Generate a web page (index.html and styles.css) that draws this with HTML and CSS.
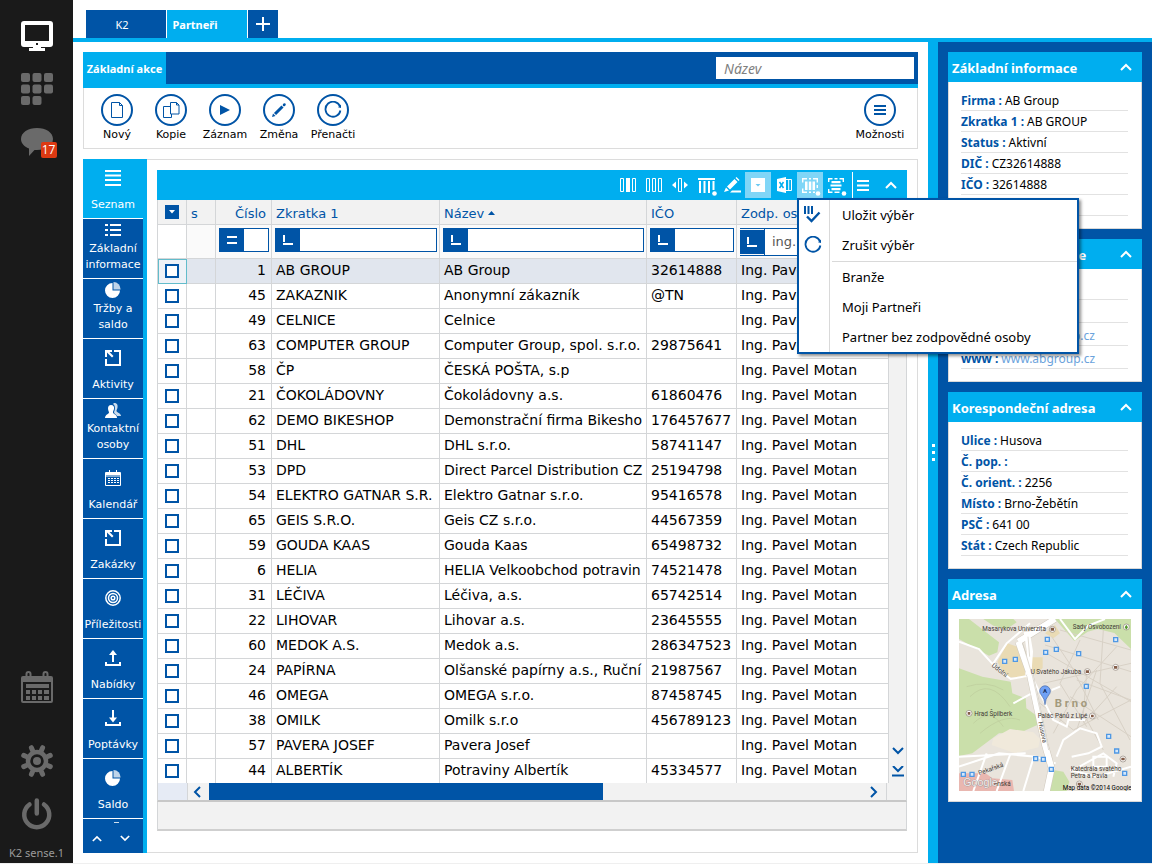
FILE: index.html
```html
<!DOCTYPE html>
<html lang="cs">
<head>
<meta charset="utf-8">
<title>K2 – Partneři</title>
<link rel="stylesheet" href="styles.css">
</head>
<body>
<svg class="defs" width="0" height="0" aria-hidden="true">
  <symbol id="up" viewBox="0 0 12 8"><path d="M1 7 6 2l5 5" fill="none" stroke="currentColor" stroke-width="2"/></symbol>
  <symbol id="down" viewBox="0 0 12 8"><path d="M1 1l5 5 5-5" fill="none" stroke="currentColor" stroke-width="2"/></symbol>
  <symbol id="reload" viewBox="0 0 18 18"><path d="M16 5.500A7.500 7.500 0 1 0 16.400 9.500" fill="none" stroke="currentColor" stroke-width="1.800"/><path d="M17 3.500v3.500l-3-.8z" fill="currentColor"/></symbol>
  <symbol id="leave" viewBox="0 0 16 16"><path d="M9 1h6v14H1V9" fill="none" stroke="currentColor" stroke-width="2"/><path d="M0 0h7v2H4.500l4 4L7 7.500l-5-5V7H0z" fill="currentColor"/></symbol>
  <symbol id="pie" viewBox="0 0 16 16"><path d="M7.500 1a7.500 7.500 0 1 0 7.500 7.500H7.500z" fill="currentColor"/><path d="M8.500 0a7 7 0 0 1 7 7.500h-7z" fill="currentColor" opacity=".75"/></symbol>
  <symbol id="starts" viewBox="0 0 10 10"><path d="M1 0v7" fill="none" stroke="currentColor" stroke-width="2"/><path d="M0 9h10" fill="none" stroke="currentColor" stroke-width="2"/></symbol>
</svg>
<div class="app">
  <aside class="rail">
    <div class="rail-group">
      <button class="rail-btn on" aria-label="Plocha"><svg width="32" height="32" viewBox="0 0 32 32"><path fill-rule="evenodd" fill="currentColor" d="M3 1h26a3 3 0 0 1 3 3v20a3 3 0 0 1-3 3H3a3 3 0 0 1-3-3V4a3 3 0 0 1 3-3zm1 4v16h24V5z"/><path fill="currentColor" d="M12 26h8v2h4v3H8v-3h4z"/><rect x="15" y="23" width="2" height="2" fill="#1a1a1a"/></svg></button>
      <button class="rail-btn" aria-label="Aplikace"><svg width="32" height="32" viewBox="0 0 32 32" fill="currentColor"><rect width="9" height="9" rx="2"/><rect x="11.500" width="9" height="9" rx="2"/><rect x="23" width="9" height="9" rx="2"/><rect y="11.500" width="9" height="9" rx="2"/><rect x="11.500" y="11.500" width="9" height="9" rx="2"/><rect x="23" y="11.500" width="9" height="9" rx="2"/><rect y="23" width="9" height="9" rx="2"/><rect x="11.500" y="23" width="9" height="9" rx="2"/></svg></button>
      <button class="rail-btn" aria-label="Zprávy"><svg width="32" height="30" viewBox="0 0 32 30" fill="currentColor"><path d="M16 2c9 0 16 4.500 16 11S25 24 16 24c-1 0-1.800 0-2.500-.1L8 30v-7.500C3 20.500 0 17 0 13 0 6.500 7 2 16 2z"/></svg><span class="badge">17</span></button>
    </div>
    <div class="rail-group">
      <button class="rail-btn cal" aria-label="Kalendář"><svg width="32" height="33" viewBox="0 0 32 33"><path fill-rule="evenodd" fill="currentColor" d="M2 5h28a2 2 0 0 1 2 2v23a2 2 0 0 1-2 2H2a2 2 0 0 1-2-2V7a2 2 0 0 1 2-2zm0 6v19h28V11z"/><path d="M5.500 8V3a2 2 0 0 1 4 0v5M22.500 8V3a2 2 0 0 1 4 0v5" fill="none" stroke="currentColor" stroke-width="2"/><path fill="currentColor" d="M5 13h23v4H5zM5 19h4v4H5zm6 0h4v4h-4zm6 0h4v4h-4zm6 0h5v4h-5zM5 25h4v4H5zm6 0h4v4h-4zm6 0h4v4h-4zm6 0h5v4h-5z"/></svg></button>
      <button class="rail-btn" aria-label="Nastavení"><svg width="32" height="32" viewBox="-16 -16 32 32"><circle r="9" fill="none" stroke="currentColor" stroke-width="4.500"/><circle r="4" fill="currentColor"/><g stroke="currentColor" stroke-width="5" stroke-linecap="round"><path d="M4.500-10.800 5.600-13.300M-4.500-10.800-5.600-13.300M4.500 10.800 5.600 13.300M-4.500 10.800-5.600 13.300M10.800-4.500 13.300-5.600M10.800 4.500 13.300 5.600M-10.800-4.500-13.300-5.600M-10.800 4.500-13.300 5.600"/></g></svg></button>
      <button class="rail-btn" aria-label="Vypnout"><svg width="32" height="32" viewBox="0 0 32 32" fill="none" stroke="currentColor" stroke-width="4.500" stroke-linecap="round"><path d="M8.500 6.500a12.500 12.500 0 1 0 14.500 0M15.800 2.500v13"/></svg></button>
      <span class="version">K2 sense.1</span>
    </div>
  </aside>

  <div class="desk">
    <nav class="tabs">
      <button class="tab">K2</button>
      <button class="tab active">Partneři</button>
      <button class="tab add" aria-label="Nová záložka"><svg width="14" height="14" viewBox="0 0 14 14"><path d="M7 0v14M0 7h14" stroke="#fff" stroke-width="2"/></svg></button>
    </nav>

    <div class="work">
      <main class="left">
        <section class="ribbon">
          <div class="ribbon-head">
            <button class="ribbon-tab">Základní akce</button>
            <input class="search" type="text" placeholder="Název" aria-label="Název">
          </div>
          <div class="actions">
            <button class="action"><span class="ring"><svg width="16" height="18" viewBox="0 0 16 18"><path d="M2.500 1.500h8l3 3v12h-11z M10.500 1.500v3h3" fill="none" stroke="currentColor"/></svg></span>Nový</button>
            <button class="action"><span class="ring"><svg width="18" height="18" viewBox="0 0 18 18" fill="none" stroke="currentColor"><path d="M8.500 1.500h6l2.500 2.500v9H8.500z M14.500 1.500V4H17M8.500 5.500h-7v11h8V13"/></svg></span>Kopie</button>
            <button class="action"><span class="ring"><svg width="12" height="12" viewBox="0 0 12 12"><path d="M1 1l10 5-10 5z" fill="currentColor"/></svg></span>Záznam</button>
            <button class="action"><span class="ring"><svg width="16" height="16" viewBox="0 0 16 16"><path d="M4 12l7.500-7.500" stroke="currentColor" stroke-width="3"/><path d="M13 3l.5-.5" stroke="currentColor" stroke-width="2.500" stroke-linecap="round"/><path d="M1 15l1-3.500L4.500 14z" fill="currentColor"/></svg></span>Změna</button>
            <button class="action"><span class="ring"><svg width="18" height="18"><use href="#reload"/></svg></span>Přenačti</button>
            <button class="action last"><span class="ring"><svg width="12" height="12" viewBox="0 0 12 12"><path d="M0 2h12M0 6h12M0 10h12" stroke="currentColor" stroke-width="2"/></svg></span>Možnosti</button>
          </div>
        </section>

        <section class="module">
          <nav class="views">
            <button class="view active"><span class="vi"><svg width="16" height="16" viewBox="0 0 16 16"><path d="M0 1h16M0 5.500h16M0 10h16M0 15h16" stroke="currentColor" stroke-width="2"/></svg></span><span class="vl">Seznam</span></button>
            <button class="view two"><span class="vi"><svg width="16" height="12" viewBox="0 0 16 12"><path d="M0 1h3M5 1h11M0 6h3M5 6h11M0 11h3M5 11h11" stroke="currentColor" stroke-width="2"/></svg></span><span class="vl">Základní informace</span></button>
            <button class="view two"><span class="vi"><svg width="16" height="16"><use href="#pie"/></svg></span><span class="vl">Tržby a saldo</span></button>
            <button class="view"><span class="vi"><svg width="16" height="16"><use href="#leave"/></svg></span><span class="vl">Aktivity</span></button>
            <button class="view two"><span class="vi"><svg width="16" height="15" viewBox="0 0 16 15" fill="currentColor"><path d="M9 0c3 0 4 2 3.500 4.500-.3 1.800-1 2.500-1 3.500 0 1.500 4.500 2 4.500 5h-4c-1-2-3-2-3-4 1-2 2-6-1-8z" opacity=".8"/><path d="M6 2c2.500 0 3.500 2 3 4-.3 1.800-1 2-1 3.500C8 11 12 11.500 12 15H0c0-3.500 4-4 4-5.500C4 8.500 3 7.500 3 5.500 3 3.500 4 2 6 2z"/></svg></span><span class="vl">Kontaktní osoby</span></button>
            <button class="view"><span class="vi"><svg width="16" height="16" viewBox="0 0 16 16"><path d="M.5 2.500h15v13H.5z M0 6h16M4.500 0v4M11.500 0v4" fill="none" stroke="currentColor"/><path d="M1 3h14v2H1z M3 8h2v1H3zm3 0h2v1H6zm3 0h2v1H9zm3 0h2v1h-2zM3 10h2v1H3zm3 0h2v1H6zm3 0h2v1H9zm3 0h2v1h-2zM3 12h2v1H3zm3 0h2v1H6zm3 0h2v1H9zm3 0h2v1h-2z" fill="currentColor"/></svg></span><span class="vl">Kalendář</span></button>
            <button class="view"><span class="vi"><svg width="16" height="16"><use href="#leave"/></svg></span><span class="vl">Zakázky</span></button>
            <button class="view"><span class="vi"><svg width="16" height="16" viewBox="0 0 16 16" fill="none" stroke="currentColor" stroke-width="1.500"><circle cx="8" cy="8" r="7.200"/><circle cx="8" cy="8" r="4.500"/><circle cx="8" cy="8" r="1.800"/></svg></span><span class="vl">Příležitosti</span></button>
            <button class="view"><span class="vi"><svg width="16" height="16" viewBox="0 0 16 16"><path d="M1 12v3h14v-3M8 12V3" fill="none" stroke="currentColor" stroke-width="2"/><path d="M4 5l4-5 4 5z" fill="currentColor"/></svg></span><span class="vl">Nabídky</span></button>
            <button class="view"><span class="vi"><svg width="16" height="16" viewBox="0 0 16 16"><path d="M1 12v3h14v-3M8 0v8" fill="none" stroke="currentColor" stroke-width="2"/><path d="M4 7.500l4 5 4-5z" fill="currentColor"/></svg></span><span class="vl">Poptávky</span></button>
            <button class="view"><span class="vi"><svg width="16" height="16"><use href="#pie"/></svg></span><span class="vl">Saldo</span></button>
            <div class="view-scroll">
              <button aria-label="Nahoru"><svg width="10" height="7"><use href="#up"/></svg></button>
              <button aria-label="Dolů"><svg width="10" height="7"><use href="#down"/></svg></button>
            </div>
          </nav>

          <div class="grid-box">
            <div class="grid-tools">
              <button class="tool" aria-label="Pevné sloupce"><svg width="16" height="14" viewBox="0 0 16 14"><path d="M.5.5h3v13h-3zM12.500.5h3v13h-3z" fill="none" stroke="#fff"/><path d="M6 0h4v14H6z" fill="#fff"/></svg></button>
              <button class="tool" aria-label="Sloupce"><svg width="16" height="14" viewBox="0 0 16 14"><path d="M.5.5h3v13h-3zM6.500.5h3v13h-3zM12.500.5h3v13h-3z" fill="none" stroke="#fff"/></svg></button>
              <button class="tool" aria-label="Šířka sloupců"><svg width="16" height="14" viewBox="0 0 16 14"><path d="M6.500.5h3v13h-3z" fill="none" stroke="#fff"/><path d="M4 3.500v7L0 7zM12 3.500v7L16 7z" fill="#fff"/></svg></button>
              <button class="tool low" aria-label="Výběr sloupců"><svg width="20" height="20" viewBox="0 0 20 20" fill="#fff"><path d="M1 1h17v2H1zM2 4h2v12H2zm4.500 0h2v12h-2zM11 4h2v12h-2zM15.500 4h2v9h-2z"/><circle cx="17.500" cy="16.500" r="2.300"/></svg></button>
              <button class="tool" aria-label="Upravit"><svg width="17" height="16" viewBox="0 0 17 16" fill="#fff"><path d="M3 9.500l7.500-7.500 3 3L6 12.500zM11.500 1l1-1 3 3-1 1zM0 15l2-4.500L5 13.500zM8 13.500h9v2H6z"/></svg></button>
              <button class="tool lit" aria-label="Filtr"><svg width="14" height="14" viewBox="0 0 14 14"><path d="M0 0h14v14H0z" fill="#fff"/><path d="M4.500 6h5L7 8.500z" fill="#6cc9f2"/></svg></button>
              <button class="tool" aria-label="Export do Excelu"><svg width="15" height="16" viewBox="0 0 15 16"><path d="M0 2l9-2v16l-9-2z" fill="#fff"/><path d="M9 2.500h5.500v11H9M11.700 3v10" fill="none" stroke="#fff"/><path d="M2.500 5l4 6M6.500 5l-4 6" stroke="#00aeef" stroke-width="1.500"/></svg></button>
              <div class="pop-anchor">
                <button class="tool lit low" aria-label="Výběr záznamů" aria-expanded="true"><svg width="20" height="20" viewBox="0 0 20 20"><path d="M1.700 5.500V1.700H6M8 1.700h2M12 1.700h4.300v3.800M1.700 11.500v3.800H6M8 15.300h2M12 15.300h2M16.300 8v3" fill="none" stroke="#fff" stroke-width="1.400"/><path d="M4 4.500h2.500v8.500H4zm3.800 0h2.500v8.500H7.800zm3.700 0H14v8.500h-2.500z" fill="#fff"/><circle cx="17" cy="16.500" r="2.300" fill="#fff"/></svg></button>
                <div class="popup" role="menu">
                  <button role="menuitem"><span class="mi"><svg width="17" height="18" viewBox="0 0 17 18"><path d="M1 0v8M4.500 0v8M8 0v8" stroke="currentColor" stroke-width="2"/><path d="M3 10.500l4.500 4.500 8-8.500" fill="none" stroke="currentColor" stroke-width="2.400"/></svg></span>Uložit výběr</button>
                  <button role="menuitem"><span class="mi"><svg width="18" height="18"><use href="#reload"/></svg></span>Zrušit výběr</button>
                  <hr>
                  <button role="menuitem"><span class="mi"></span>Branže</button>
                  <button role="menuitem"><span class="mi"></span>Moji Partneři</button>
                  <button role="menuitem"><span class="mi"></span>Partner bez zodpovědné osoby</button>
                </div>
              </div>
              <button class="tool low" aria-label="Seskupení"><svg width="20" height="20" viewBox="0 0 20 20"><path d="M1.700 5V1.700h3.800M7.500 1.700h3M12.500 1.700h3.800V5M1.700 12v3.300h3.800M7.500 15.300h5" fill="none" stroke="#fff" stroke-width="1.400"/><path d="M4.500 4h9v2.200h-9zM3.500 7.500h11v2h-11zM4.500 11h9v2.200h-9z" fill="#fff"/><circle cx="17" cy="16.500" r="2.300" fill="#fff"/></svg></button>
              <button class="tool menu" aria-label="Nabídka"><svg width="12" height="11" viewBox="0 0 12 11"><path d="M0 1h12M0 5.500h12M0 10h12" stroke="#fff" stroke-width="2"/></svg></button>
              <button class="tool" aria-label="Sbalit"><svg width="12" height="8"><use href="#up"/></svg></button>
            </div>

            <div class="grid-main">
              <table class="grid">
                <colgroup><col class="c-check"><col class="c-s"><col class="c-num"><col class="c-abbr"><col class="c-name"><col class="c-ico"><col></colgroup>
                <thead>
                  <tr class="heads">
                    <th class="ck"><button class="pick" aria-label="Označit"><svg width="6" height="4" viewBox="0 0 6 4"><path d="M0 0h6L3 3.500z" fill="#fff"/></svg></button></th>
                    <th>s</th><th class="n">Číslo</th><th>Zkratka 1</th><th>Název <svg width="7" height="4" viewBox="0 0 7 4" class="sort"><path d="M0 4h7L3.500 0z" fill="currentColor"/></svg></th><th>IČO</th><th>Zodp. osoba</th>
                  </tr>
                  <tr class="filters">
                    <td></td><td></td>
                    <td><div class="flt"><button aria-label="Rovná se"><svg width="10" height="8" viewBox="0 0 10 8"><path d="M0 1h10M0 7h10" stroke="#fff" stroke-width="2"/></svg></button><input type="text" aria-label="Filtr Číslo"></div></td>
                    <td><div class="flt"><button aria-label="Začíná na"><svg width="10" height="10"><use href="#starts"/></svg></button><input type="text" aria-label="Filtr Zkratka 1"></div></td>
                    <td><div class="flt"><button aria-label="Začíná na"><svg width="10" height="10"><use href="#starts"/></svg></button><input type="text" aria-label="Filtr Název"></div></td>
                    <td><div class="flt"><button aria-label="Začíná na"><svg width="10" height="10"><use href="#starts"/></svg></button><input type="text" aria-label="Filtr IČO"></div></td>
                    <td><div class="flt tall"><button aria-label="Začíná na"><svg width="10" height="10"><use href="#starts"/></svg></button><input type="text" value="ing." aria-label="Filtr Zodpovědná osoba"></div></td>
                  </tr>
                </thead>
                <tbody>
                  <tr class="sel"><td class="ck"><input type="checkbox" aria-label="AB GROUP"></td><td></td><td class="n">1</td><td>AB GROUP</td><td>AB Group</td><td>32614888</td><td>Ing. Pavel Motan</td></tr>
                  <tr><td class="ck"><input type="checkbox" aria-label="ZAKAZNIK"></td><td></td><td class="n">45</td><td>ZAKAZNIK</td><td>Anonymní zákazník</td><td>@TN</td><td>Ing. Pavel Motan</td></tr>
                  <tr><td class="ck"><input type="checkbox" aria-label="CELNICE"></td><td></td><td class="n">49</td><td>CELNICE</td><td>Celnice</td><td></td><td>Ing. Pavel Motan</td></tr>
                  <tr><td class="ck"><input type="checkbox" aria-label="COMPUTER GROUP"></td><td></td><td class="n">63</td><td>COMPUTER GROUP</td><td>Computer Group, spol. s.r.o.</td><td>29875641</td><td>Ing. Pavel Motan</td></tr>
                  <tr><td class="ck"><input type="checkbox" aria-label="ČP"></td><td></td><td class="n">58</td><td>ČP</td><td>ČESKÁ POŠTA, s.p</td><td></td><td>Ing. Pavel Motan</td></tr>
                  <tr><td class="ck"><input type="checkbox" aria-label="ČOKOLÁDOVNY"></td><td></td><td class="n">21</td><td>ČOKOLÁDOVNY</td><td>Čokoládovny a.s.</td><td>61860476</td><td>Ing. Pavel Motan</td></tr>
                  <tr><td class="ck"><input type="checkbox" aria-label="DEMO BIKESHOP"></td><td></td><td class="n">62</td><td>DEMO BIKESHOP</td><td>Demonstrační firma Bikesho</td><td>176457677</td><td>Ing. Pavel Motan</td></tr>
                  <tr><td class="ck"><input type="checkbox" aria-label="DHL"></td><td></td><td class="n">51</td><td>DHL</td><td>DHL s.r.o.</td><td>58741147</td><td>Ing. Pavel Motan</td></tr>
                  <tr><td class="ck"><input type="checkbox" aria-label="DPD"></td><td></td><td class="n">53</td><td>DPD</td><td>Direct Parcel Distribution CZ</td><td>25194798</td><td>Ing. Pavel Motan</td></tr>
                  <tr><td class="ck"><input type="checkbox" aria-label="ELEKTRO GATNAR"></td><td></td><td class="n">54</td><td>ELEKTRO GATNAR S.R.</td><td>Elektro Gatnar s.r.o.</td><td>95416578</td><td>Ing. Pavel Motan</td></tr>
                  <tr><td class="ck"><input type="checkbox" aria-label="GEIS S.R.O."></td><td></td><td class="n">65</td><td>GEIS S.R.O.</td><td>Geis CZ s.r.o.</td><td>44567359</td><td>Ing. Pavel Motan</td></tr>
                  <tr><td class="ck"><input type="checkbox" aria-label="GOUDA KAAS"></td><td></td><td class="n">59</td><td>GOUDA KAAS</td><td>Gouda Kaas</td><td>65498732</td><td>Ing. Pavel Motan</td></tr>
                  <tr><td class="ck"><input type="checkbox" aria-label="HELIA"></td><td></td><td class="n">6</td><td>HELIA</td><td>HELIA Velkoobchod potravin</td><td>74521478</td><td>Ing. Pavel Motan</td></tr>
                  <tr><td class="ck"><input type="checkbox" aria-label="LÉČIVA"></td><td></td><td class="n">31</td><td>LÉČIVA</td><td>Léčiva, a.s.</td><td>65742514</td><td>Ing. Pavel Motan</td></tr>
                  <tr><td class="ck"><input type="checkbox" aria-label="LIHOVAR"></td><td></td><td class="n">22</td><td>LIHOVAR</td><td>Lihovar a.s.</td><td>23645555</td><td>Ing. Pavel Motan</td></tr>
                  <tr><td class="ck"><input type="checkbox" aria-label="MEDOK A.S."></td><td></td><td class="n">60</td><td>MEDOK A.S.</td><td>Medok a.s.</td><td>286347523</td><td>Ing. Pavel Motan</td></tr>
                  <tr><td class="ck"><input type="checkbox" aria-label="PAPÍRNA"></td><td></td><td class="n">24</td><td>PAPÍRNA</td><td>Olšanské papírny a.s., Ruční</td><td>21987567</td><td>Ing. Pavel Motan</td></tr>
                  <tr><td class="ck"><input type="checkbox" aria-label="OMEGA"></td><td></td><td class="n">46</td><td>OMEGA</td><td>OMEGA s.r.o.</td><td>87458745</td><td>Ing. Pavel Motan</td></tr>
                  <tr><td class="ck"><input type="checkbox" aria-label="OMILK"></td><td></td><td class="n">38</td><td>OMILK</td><td>Omilk s.r.o</td><td>456789123</td><td>Ing. Pavel Motan</td></tr>
                  <tr><td class="ck"><input type="checkbox" aria-label="PAVERA JOSEF"></td><td></td><td class="n">57</td><td>PAVERA JOSEF</td><td>Pavera Josef</td><td></td><td>Ing. Pavel Motan</td></tr>
                  <tr><td class="ck"><input type="checkbox" aria-label="ALBERTÍK"></td><td></td><td class="n">44</td><td>ALBERTÍK</td><td>Potraviny Albertík</td><td>45334577</td><td>Ing. Pavel Motan</td></tr>
                </tbody>
              </table>
              <div class="vbar">
                <button aria-label="Další"><svg width="12" height="8"><use href="#down"/></svg></button>
                <button aria-label="Poslední"><svg width="12" height="11" viewBox="0 0 12 11"><path d="M1 0l5 5 5-5M0 9.500h12" fill="none" stroke="currentColor" stroke-width="2"/></svg></button>
              </div>
            </div>
            <div class="hbar">
              <span class="corner"></span>
              <button aria-label="Vlevo"><svg width="8" height="12" viewBox="0 0 8 12"><path d="M7 1 2 6l5 5" fill="none" stroke="currentColor" stroke-width="2"/></svg></button>
              <div class="track"><div class="thumb"></div></div>
              <button aria-label="Vpravo"><svg width="8" height="12" viewBox="0 0 8 12"><path d="M1 1l5 5-5 5" fill="none" stroke="currentColor" stroke-width="2"/></svg></button>
              <span class="end"></span>
            </div>
            <div class="grid-foot"></div>
          </div>
        </section>
      </main>

      <div class="splitter"><i></i><i></i><i></i></div>

      <aside class="right">
        <section class="card">
          <header><h2>Základní informace</h2><button aria-label="Sbalit"><svg width="12" height="8"><use href="#up"/></svg></button></header>
          <dl>
            <div><dt>Firma :</dt><dd>AB Group</dd></div>
            <div><dt>Zkratka 1 :</dt><dd>AB GROUP</dd></div>
            <div><dt>Status :</dt><dd>Aktivní</dd></div>
            <div><dt>DIČ :</dt><dd>CZ32614888</dd></div>
            <div><dt>IČO :</dt><dd>32614888</dd></div>
            <div></div>
          </dl>
        </section>
        <section class="card roomy">
          <header><h2>Kontaktní informace</h2><button aria-label="Sbalit"><svg width="12" height="8"><use href="#up"/></svg></button></header>
          <dl>
            <div></div>
            <div></div>
            <div><dt>E-mail :</dt><dd><a href="#mail">ab@abgroup.cz</a></dd></div>
            <div><dt>www :</dt><dd><a href="#www">www.abgroup.cz</a></dd></div>
          </dl>
        </section>
        <section class="card">
          <header><h2>Korespondeční adresa</h2><button aria-label="Sbalit"><svg width="12" height="8"><use href="#up"/></svg></button></header>
          <dl>
            <div><dt>Ulice :</dt><dd>Husova</dd></div>
            <div><dt>Č. pop. :</dt><dd></dd></div>
            <div><dt>Č. orient. :</dt><dd>2256</dd></div>
            <div><dt>Místo :</dt><dd>Brno-Žebětín</dd></div>
            <div><dt>PSČ :</dt><dd>641 00</dd></div>
            <div><dt>Stát :</dt><dd>Czech Republic</dd></div>
          </dl>
        </section>
        <section class="card">
          <header><h2>Adresa</h2><button aria-label="Sbalit"><svg width="12" height="8"><use href="#up"/></svg></button></header>
          <div class="map">
            <svg viewBox="87 147 516 516" role="img" aria-label="Mapa Brno">
              <path fill="#e9e4dc" d="M87 147h516v516H87z"/>
              <path fill="#cadfaa" d="M375 147h228v90l-50-48-50-12-30 8-40 28zM87 147h30l90 70-5 30-25 10-90-50zM87 295l70 25 85 15 5 35 40 15 2 30 28 20 5 30-55 25-60 0-40 30-40 30-40 8z"/>
              <path fill="#cadfaa" d="M370 600l30 5 18 30-8 28h-55zM160 147h90l10 10-30 20-40-10z"/>
              <path fill="#eadbb4" d="M232 220l30 10 20 45 5 50-60-5-25-45zM300 262h38v32l-22 20-10-10zM345 190l30-25 15 25-20 15z"/>
              <path fill="#f0e9db" d="M190 505l50-28 70 10 20 20-5 25-70 18-70-25z"/>
              <path fill="#e9b7b0" d="M87 610h80l20 15 60 5 5 33H87z"/>
              <g fill="none" stroke="#d8d1c6" stroke-width="3"><path d="M345 225l258 80M350 250l253 145M340 340l263-60M365 200l60 90 80 160M450 210l-60 130 80 130M520 180l-10 160 90 170M560 230l-120 130-70 130M440 330l163 60M420 380l183 120M470 310l-10 120 60 110M330 400l100 80 173-90M500 300l-60 180M560 350l-100 110M390 180l213 60"/></g>
              <g fill="none" stroke="#bccb9c" stroke-width="2"><path d="M120 380q60-60 120 30M130 460q50-50 90 10M150 490q70-60 120-40M110 350q60-20 110 10"/></g>
              <g fill="none" stroke="#fff" stroke-width="6"><path d="M87 215l60 22 50 55 45 35 55-10M190 280l40-60 70-60M87 590l120-40 110 10 60 20M87 560l200-10M170 550l-40 113M240 555l-40 108M310 565l-30 98M250 400l55-30M310 330l60 120 40 20 5-20h50M365 360l25-10M380 560l20-50 50-35 50 15 15 40-40 20-50 10M430 600l90-50 40 30-10 40M420 600l80 20 103-30M390 147l45 60 40-40 50-20M490 560h40v30h-40z"/></g>
              <g fill="none" stroke="#cfc8bc" stroke-width="21"><path d="M265 215l35 100 45 210 20 70-15 70M265 215l110-68"/></g>
              <g fill="none" stroke="#fff" stroke-width="18"><path d="M265 215l35 100 45 210 20 70-15 70M265 215l110-68M290 185l10 60-5 70"/></g>
              <path fill="none" stroke="#cfc8bc" stroke-width="2" d="M278 220l30 100 48 220M294 200l5 60"/>
              <g fill="#d5e8fb" stroke="#4f98e4" stroke-width="4"><path d="M346 202h12v12h-12zM341 241h12v12h-12zM373 232h12v12h-12zM218 268h12v12h-12zM250 262h12v12h-12zM440 245h12v12h-12zM551 203h12v12h-12zM463 343h12v12h-12zM530 493h12v12h-12zM554 537h12v12h-12zM311 560h12v12h-12zM334 562h12v12h-12zM358 592h12v12h-12zM578 604h12v12h-12zM94 607h12v12H94zM120 607h12v12h-12z"/></g>
              <g fill="#fff" stroke="#8f8378" stroke-width="2"><circle cx="367" cy="178" r="9"/><circle cx="589" cy="171" r="9"/><circle cx="472" cy="305" r="9"/><circle cx="557" cy="292" r="9"/><circle cx="117" cy="430" r="9"/><circle cx="487" cy="438" r="9"/><circle cx="579" cy="567" r="9"/><circle cx="448" cy="642" r="9"/></g>
              <g fill="#835c47"><path d="M362 173h10v9h-10zM467 301h10v8h-10zM552 288h10v8h-10zM113 426h8v8h-8zM483 434h8v8h-8zM574 563h10v8h-10zM443 638h10v8h-10z"/></g>
              <path fill="#54982e" d="M589 164l5 8-5 7-5-7z"/>
              <g class="map-text">
                <text x="157" y="184">Masarykova Univerzita</text><text x="428" y="177">Sady Osvobození</text><text x="302" y="311">U Svatého Jakuba</text><text x="133" y="437">Hrad Špilberk</text><text x="323" y="445">Palác Pánů z Lipé</text><text x="422" y="603">Katedrála svatého</text><text x="422" y="624">Petra a Pavla</text>
                <text transform="translate(184 289) rotate(38)">Údolní</text><text transform="translate(325 457) rotate(78)">Husova</text><text transform="translate(148 616) rotate(-20)">Pekařská</text><text x="192" y="648">enská</text>
              </g>
              <text class="map-city" x="374" y="410">B r n o</text>
              <path d="M345 404q-1-18-11-29a16 16 0 1 1 22 0q-10 11-11 29z" fill="#70a1f5" stroke="#3c64a8" stroke-width="2"/>
              <text class="map-pin" x="345" y="370">A</text>
              <text class="map-logo" x="100" y="647">Google</text>
              <text class="map-copy" x="398" y="659">Map data ©2014 Google</text>
            </svg>
          </div>
        </section>
      </aside>
    </div>
  </div>
</div>
</body>
</html>
```
FILE: styles.css
```css
:root {
  --blue: #0054a6;
  --cyan: #00aeef;
  --line: #d4d6d8;
  --pale: #f2f2f2;
  --ui: "DejaVu Sans", sans-serif;
  --text: "Noto Sans", "Open Sans", sans-serif;
}
* { box-sizing: border-box; }
body { margin: 0; background: #efefef; font-family: var(--ui); font-size: 11px; color: #000; }
button { font: inherit; color: inherit; background: none; border: 0; padding: 0; margin: 0; display: flex; align-items: center; justify-content: center; }
input { font: inherit; margin: 0; border-radius: 0; }
svg { display: block; flex: none; }
.defs { position: absolute; }
.app { display: flex; min-height: 100vh; padding-bottom: 1px; }

/* Left rail */
.rail { width: 73px; flex: none; background: #1a1a1a; display: flex; flex-direction: column; justify-content: space-between; padding: 20px 0 2px; }
.rail-group { display: flex; flex-direction: column; align-items: center; gap: 21px; }
.rail-btn { position: relative; color: #6a6a6a; }
.rail-btn.on { color: #fff; }
.rail-btn.cal { margin-bottom: 20px; }
.badge { position: absolute; right: -4px; bottom: -2px; width: 16px; height: 16px; border-radius: 2px; background: #dc3912; color: #fff; font: 12px/16px "Open Sans", sans-serif; text-align: center; }
.version { color: #9a9a9a; font: 11px/16px var(--text); margin-top: -6px; }

/* Tabs */
.desk { flex: 1; min-width: 0; display: flex; flex-direction: column; background: #fff; }
.tabs { display: flex; align-items: flex-end; gap: 1px; height: 42px; padding-left: 13px; border-bottom: 4px solid var(--cyan); }
.tab { width: 80px; height: 28px; background: var(--blue); color: #fff; font: 11px/16px var(--text); padding: 2px 8px 0 0; }
.tab.active { background: var(--cyan); font-weight: 700; padding-right: 24px; }
.tab.add { width: 30px; padding: 0; }
.work { flex: 1; display: flex; }
.left { flex: 1; min-width: 0; padding: 10px; display: flex; flex-direction: column; gap: 10px; }

/* Ribbon */
.ribbon { border: 1px solid #dcdcdc; border-top: 0; }
.ribbon-head { margin: 0 -1px; height: 36px; background: var(--blue); border-bottom: 4px solid var(--cyan); display: flex; justify-content: space-between; }
.ribbon-tab { width: 83px; background: var(--cyan); color: #fff; font: 700 11px/16px var(--text); white-space: nowrap; padding-top: 2px; }
.search { width: 198px; height: 22px; margin: 5px 4px 0 0; border: 0; padding: 0 8px; font: 14px/20px var(--text); }
.search::placeholder { color: #808080; font-style: italic; opacity: 1; }
.actions { display: flex; gap: 6px; padding: 6px 13px 6px 9px; }
.action { flex-direction: column; width: 48px; gap: 2px; line-height: 14px; justify-content: flex-start; white-space: nowrap; }
.ring { width: 32px; height: 32px; border: 2px solid var(--blue); border-radius: 50%; color: var(--blue); display: grid; place-items: center; }
.action.last { margin-left: auto; }

/* Views */
.module { flex: 1; display: flex; }
.views { width: 64px; flex: none; border-right: 4px solid var(--cyan); background: var(--blue); color: #fff; display: flex; flex-direction: column; }
.view { width: 100%; height: 60px; border-bottom: 1px solid #fff; flex-direction: column; justify-content: flex-start; }
.view.active { background: var(--cyan); }
.vi { height: 38px; display: grid; place-items: center; }
.vl { line-height: 16px; }
.two .vi { height: 22px; }
.view-scroll { position: relative; flex: 1; display: flex; align-items: center; justify-content: space-between; padding: 4px 13px 0 9px; }
.view-scroll::before { content: ""; position: absolute; left: 31px; top: 3px; width: 5px; height: 1px; background: #cfe0f0; }

/* Grid */
.grid-box { flex: 1; min-width: 0; border: 1px solid #dcdcdc; border-left: 0; padding: 10px 10px 21px; display: flex; flex-direction: column; }
.grid-tools { height: 30px; background: var(--cyan); color: #fff; display: flex; align-items: center; justify-content: flex-end; padding-right: 3px; }
.tool { width: 26px; height: 26px; }
.tool.low { padding: 3px 0 0 2px; }
.tool.lit { background: #80d6f7; }
.tool.menu { border-left: 1px solid #fff; padding-right: 6px; margin-left: 3px; }
.pop-anchor { position: relative; }
.popup { position: absolute; z-index: 2; left: 0; top: 26px; width: 282px; background: linear-gradient(#d9d9d9, #d9d9d9) 30px 0 / 1px 100% no-repeat #fff; border: 2px solid var(--blue); box-shadow: 2px 2px 3px rgba(0, 0, 0, .45); color: #000; font: 13px/20px var(--text); }
.popup button { width: 100%; height: 30px; justify-content: flex-start; }
.popup hr { margin: 1px 0 0 33px; border: 0; border-top: 1px solid #d9d9d9; }
.mi { width: 43px; padding-left: 5px; color: var(--blue); }
.grid-main { display: flex; border-left: 1px solid var(--line); }
.grid { flex: 1; min-width: 0; width: 0; table-layout: fixed; border-collapse: separate; border-spacing: 0; font-size: 14px; }
.c-check, .c-s { width: 29px; }
.c-num { width: 56px; }
.c-abbr { width: 168px; }
.c-name { width: 207px; }
.c-ico { width: 90px; }
.grid th, .grid td { padding: 0 3px 2px 4px; border-right: 1px solid var(--line); border-bottom: 1px solid var(--line); height: 25px; line-height: 20px; overflow: hidden; white-space: nowrap; text-align: left; }
.grid th { background: var(--pale); color: var(--blue); font-weight: 400; font-size: 13px; padding-top: 3px; padding-bottom: 0; }
.grid .n { text-align: right; padding-right: 5px; }
.grid .ck { padding: 0; }
.grid .filters td { height: 34px; background: #fafafa; padding: 0 2px 0 3px; }
.grid .filters td:first-child { background: #fff; }
.sort { display: inline-block; vertical-align: 3px; }
.pick { width: 14px; height: 14px; margin: 0 auto; background: var(--blue); }
.ck input { appearance: none; display: block; width: 14px; height: 14px; margin: 0 auto; border: 2px solid var(--blue); background: #fff; }
.sel td { background: #e1e6ee; }
.sel .ck { background: #eef2f7; outline: 1px solid #62bccb; outline-offset: -1px; }
.flt { display: flex; height: 24px; border: 1px solid var(--blue); margin-bottom: 4px; }
.flt button { width: 24px; background: var(--blue); color: #fff; flex: none; }
.flt input { flex: 1; min-width: 0; width: 0; border: 0; padding: 0 7px; font: 13px/20px var(--ui); color: #555; }
.flt.tall { height: 28px; border-width: 1px 1px 1px 0; margin: 0; }
.flt.tall button { height: 24px; margin-top: 1px; }
.flt.tall input { border-left: 1px solid var(--blue); }
.grid tbody tr:last-child td { border-bottom: 0; height: 24px; }
.vbar { width: 18px; flex: none; background: var(--pale); border-right: 1px solid var(--line); color: var(--blue); display: flex; flex-direction: column; justify-content: flex-end; align-items: center; gap: 11px; padding-bottom: 6px; }
.hbar { height: 19px; border: 1px solid var(--line); border-top: 0; border-bottom: 2px solid #c8c8c8; background: var(--pale); color: var(--blue); display: flex; align-items: stretch; }
.hbar button { width: 21px; padding-right: 4px; }
.corner { width: 30px; background: #e6ebf5; border-right: 1px solid var(--line); }
.track { flex: 1; }
.thumb { width: 60%; height: 100%; background: var(--blue); }
.end { width: 20px; border-left: 1px solid var(--line); }
.grid-foot { flex: 1; min-height: 28px; background: var(--pale); border: 1px solid var(--line); border-top: 0; border-bottom: 2px solid #cfcfcf; }

/* Splitter and right panel */
.splitter { width: 10px; flex: none; background: var(--cyan); display: flex; flex-direction: column; align-items: center; justify-content: center; gap: 4px; }
.splitter i { width: 3px; height: 3px; background: #fff; }
.right { width: 214px; flex: none; background: var(--blue); padding: 10px; display: flex; flex-direction: column; gap: 10px; font-family: var(--text); }
.card { background: #fff; border: 1px solid #d9d9d9; border-top: 0; }
.card header { height: 30px; margin: 0 -1px; padding: 0 10px 0 4px; background: var(--cyan); color: #fff; display: flex; align-items: center; justify-content: space-between; }
.card h2 { margin: 0; font-size: 13px; line-height: 20px; padding-top: 2px; white-space: nowrap; }
.card dl { margin: 0; padding: 8px 13px 12px 12px; font-size: 12px; }
.card dl div { display: flex; gap: 3px; height: 21px; line-height: 22px; border-bottom: 1px solid #e2e2e2; white-space: nowrap; }
.roomy dl div { height: 23px; line-height: 26px; }
.card dt { font-weight: 700; color: var(--blue); }
.card dd { margin: 0; }
.card a { color: #6ba3dc; text-decoration: none; }
.map { padding: 10px; }
.map svg { width: 100%; }
.map-text { font: 19px "Roboto", sans-serif; fill: #3f3a35; }
.map-city { font: 700 34px "Roboto", sans-serif; fill: #a39a7c; }
.map-pin { font: 700 18px "Roboto", sans-serif; text-anchor: middle; fill: #172f5c; }
.map-logo { font: 32px "Liberation Sans", sans-serif; fill: #f4eeee; stroke: #8b8b8b; stroke-width: 2px; paint-order: stroke; }
.map-copy { font: 19px "Roboto", sans-serif; fill: #000; }
```
